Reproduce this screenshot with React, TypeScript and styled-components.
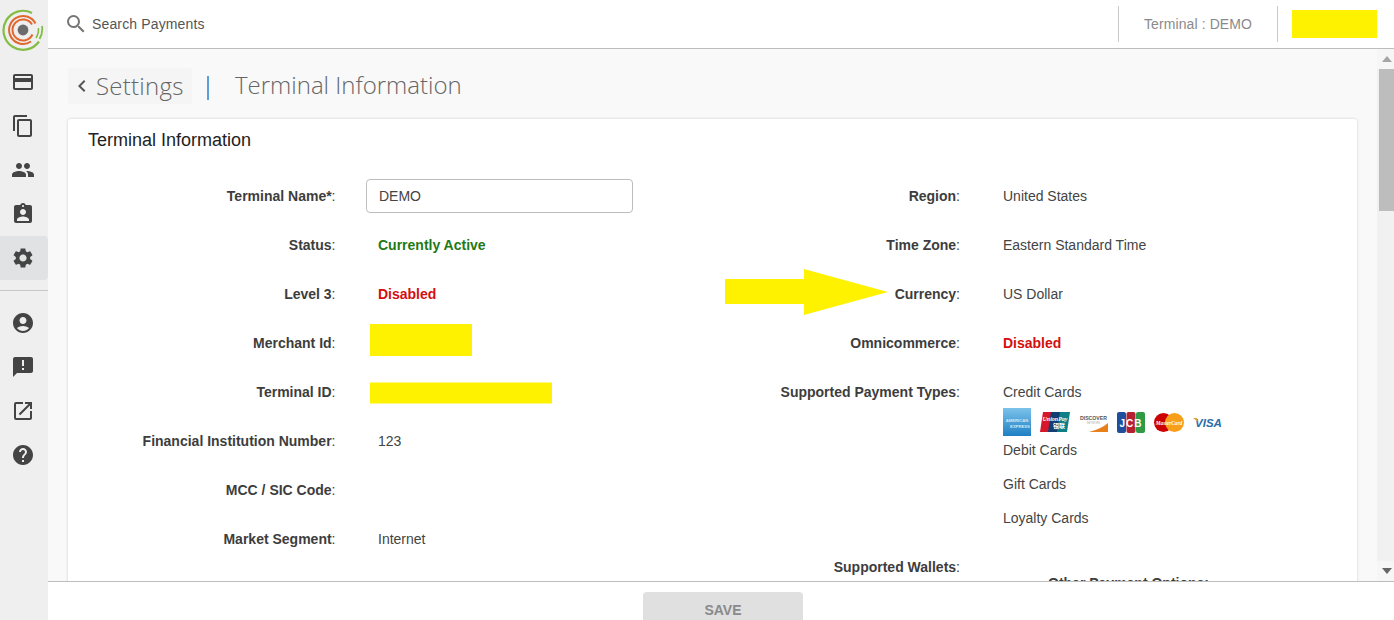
import React from "react";
import styled, { createGlobalStyle } from "styled-components";
import {
  MdCreditCard, MdContentCopy, MdPeople, MdAssignmentInd, MdSettings,
  MdAccountCircle, MdAnnouncement, MdOpenInNew, MdHelp, MdSearch, MdChevronLeft,
} from "react-icons/md";

const Global = createGlobalStyle`
  html, body { margin: 0; height: 100%; overflow: hidden; background: #fff; }
  body { font-family: "Liberation Sans", Arial, sans-serif; font-size: 14px; color: #333; }
  * { box-sizing: border-box; }
`;

const Shell = styled.div`display: flex; width: 100vw; height: 100vh; overflow: hidden;`;
const Sidebar = styled.nav`width: 48px; flex: none; background: #efefef; display: flex; flex-direction: column;`;
const LogoBox = styled.div`height: 60px; display: flex; align-items: center; padding-left: 2px;`;
const NavItem = styled.div<{ $active?: boolean }>`
  height: 44px; display: flex; align-items: center; justify-content: center; color: #444; padding-right: 2px;
  font-size: 24px; background: ${p => (p.$active ? "#e0e2e4" : "transparent")};
  border-radius: ${p => (p.$active ? "0 4px 4px 0" : "0")};
`;
const NavRule = styled.hr`border: 0; height: 1px; background: #c8c8c8; margin: 10px 0 10px;`;
const Main = styled.div`flex: 1; min-width: 0; display: flex; flex-direction: column;`;
const TopBar = styled.header`
  height: 49px; flex: none; background: #fff; border-bottom: 1px solid #bdbdbd; display: flex; align-items: center;
`;
const SearchIcon = styled.span`display: flex; margin-left: 16px; font-size: 24px; color: #757575;`;
const SearchText = styled.span`margin-left: 4px; font-size: 14px; letter-spacing: .14px; color: #555; flex: 1;`;
const TerminalCell = styled.div`
  height: 36px; width: 160px; border-left: 1px solid #c8c8c8; border-right: 1px solid #c8c8c8; color: #8a8a8a;
  display: flex; align-items: center; justify-content: center; font-size: 14px; letter-spacing: .1px; margin-right: 14px;
`;
const HeaderMask = styled.div`width: 85px; height: 28px; background: #fff200; margin-right: 17px;`;
const Body = styled.div`flex: 1; min-height: 0; display: flex;`;
const Scroller = styled.div`flex: 1; min-width: 0; overflow: hidden; background: #f9f9f9;`;
const ScrollRail = styled.div`width: 17px; flex: none; background: #f1f1f1; display: flex; flex-direction: column; align-items: flex-end;`;
const ScrollButton = styled.div`width: 17px; height: 20px; flex: none; display: flex; align-items: center; justify-content: center; padding-left: 3px; background: #f6f6f6;`;
const ScrollThumb = styled.div`width: 15px; height: 142px; background: #bdbdbd; flex: none;`;
const ScrollGap = styled.div`flex: 1;`;
const Page = styled.div`padding: 19px 20px 20px 20px;`;
const Crumbs = styled.div`display: flex; align-items: center; height: 36px; margin-bottom: 15px; font-family: "Open Sans", sans-serif; font-weight: 300; font-size: 24px; color: #666;`;
const BackChip = styled.div`
  width: 124px; height: 36px; background: #f5f5f5; border-radius: 3px; display: flex; align-items: center; padding: 0 0 2px 2px;
  font-size: 24px; letter-spacing: .25px; color: #666;
`;
const BackIcon = styled.span`display: flex; font-size: 24px; color: #555; margin-right: 2px; padding-top: 2px;`;
const Pipe = styled.span`margin-left: 15px; width: 28px; height: 24px; display: flex; align-items: center;`;
const PipeBar = styled.i`display: block; width: 2px; height: 24px; background: #5a9fd6; margin-top: 4px;`;
const CrumbTitle = styled.span`margin-top: -4px;`;
const Card = styled.section`
  position: relative; background: #fff; border-radius: 3px; box-shadow: 0 0 3px rgba(0, 0, 0, .18); height: 1753px; padding: 0 0 0 20px;
`;
const CardTitle = styled.h2`margin: 0; padding-top: 10px; height: 52px; font-size: 18px; line-height: 22px; font-weight: 400; color: #222;`;
const Columns = styled.div`display: grid; grid-template-columns: 625px 1fr;`;
const Column = styled.div`display: flex; flex-direction: column;`;
const Row = styled.div<{ $h?: number; $label?: number }>`
  display: grid; grid-template-columns: ${p => p.$label ?? 247}px 1fr; column-gap: ${p => 278 - (p.$label ?? 247)}px;
  height: ${p => p.$h ?? 49}px;
`;
const Label = styled.div`text-align: right; font-weight: 700; line-height: 50px; font-size: 14px; color: #3d3d3d;`;
const Colon = styled.span`font-weight: 400;`;
const Value = styled.div`padding-left: 12px; line-height: 50px; font-size: 14px; color: #444;`;
const StatusValue = styled(Value)<{ $tone: string }>`font-weight: 700; color: ${p => p.$tone};`;
const InputBox = styled.div`
  width: 267px; height: 34px; margin-top: 7.5px; border: 1px solid #bdbdbd; border-radius: 4px; background: #fff;
  padding-left: 12px; line-height: 32px; font-size: 14px; color: #444;
`;
const MaskCell = styled.div<{ $shift: number }>`display: flex; align-items: center; padding-left: 4px; height: 50px; transform: translateY(${p => p.$shift}px);`;
const Mask = styled.div<{ $w: number; $h: number }>`width: ${p => p.$w}px; height: ${p => p.$h}px; background: #fff200;`;
const StackValue = styled.div`padding-left: 12px; padding-top: 17px; font-size: 14px; color: #444; line-height: 17px;`;
const CreditLine = styled.div`height: 24px;`;
const StackLine = styled.div`height: 34px;`;
const LogoRow = styled.div`display: flex; gap: 9px; align-items: center; height: 28px; margin-bottom: 6px;`;
const Other = styled.div`
  margin-left: 335px; margin-top: -16px; font-weight: 700; font-size: 14px; color: #3d3d3d; white-space: nowrap;
`;
const Arrow = styled.svg`position: absolute; left: 657px; top: 149px;`;
const Footer = styled.footer`
  height: 39px; flex: none; background: #fff; border-top: 1px solid #bdbdbd; overflow: hidden;
  display: flex; justify-content: center; padding: 10px 0 0 4px;
`;
const SaveButton = styled.div`
  width: 160px; height: 36px; flex: none; background: #e0e0e0; border-radius: 4px; color: #8a8a8a; font-weight: 700; font-size: 14px;
  display: flex; align-items: center; justify-content: center;
`;

const Logo = () => (
  <svg width="42" height="42" viewBox="0 0 42 42" fill="none">
    <circle cx="21" cy="21" r="5.4" fill="#6b6b6b" />
    <path d="M30 15.5A10.5 10.5 0 1 0 30.5 25.5" stroke="#e0672d" strokeWidth="2" />
    <path d="M33.5 14.5A14 14 0 1 0 29 32.5" stroke="#e0672d" strokeWidth="2" />
    <path d="M30 4A19.5 19.5 0 1 0 37 32.5" stroke="#84bd45" strokeWidth="2.2" />
    <path d="M37.5 30A19.5 19.5 0 0 0 40 17" stroke="#84bd45" strokeWidth="1.8" />
    <path d="M34 29A16 16 0 0 0 36.5 19" stroke="#84bd45" strokeWidth="1.5" />
  </svg>
);

const Amex = () => (
  <svg width="28" height="28" viewBox="0 0 28 28">
    <defs><linearGradient id="ax" x1="0" y1="0" x2="0" y2="1"><stop offset="0" stopColor="#7cc3ea" /><stop offset="1" stopColor="#1e7fc4" /></linearGradient></defs>
    <rect width="28" height="28" fill="url(#ax)" />
    <text x="14" y="14" fontSize="4.2" fontFamily="Liberation Sans" fontWeight="700" textAnchor="middle" fill="#cfe9f8">AMERICAN</text>
    <text x="17" y="20" fontSize="4.2" fontFamily="Liberation Sans" fontWeight="700" textAnchor="middle" fill="#cfe9f8">EXPRESS</text>
  </svg>
);
const UnionPay = () => (
  <svg width="30" height="20" viewBox="0 0 30 20">
    <path d="M3 0h10l-3 20H0z" fill="#d6172b" />
    <path d="M11 0h11l-3 20H8z" fill="#123f73" />
    <path d="M20 0h10l-3 20H17z" fill="#0e7f86" />
    <text x="15" y="9" fontSize="6" fontFamily="Liberation Serif" fontStyle="italic" fontWeight="700" textAnchor="middle" fill="#fff">UnionPay</text>
    <text x="19" y="16" fontSize="6" fontFamily="Noto Sans CJK SC, sans-serif" fontWeight="700" textAnchor="middle" fill="#fff">银联</text>
  </svg>
);
const Discover = () => (
  <svg width="29" height="20" viewBox="0 0 29 20">
    <path d="M10 20Q22 17 29 11v9z" fill="#e8811c" />
    <text x="14.5" y="8" fontSize="5.2" fontFamily="Liberation Sans" fontWeight="700" textAnchor="middle" fill="#555">DISCOVER</text>
    <text x="14.5" y="12" fontSize="2.6" fontFamily="Liberation Sans" textAnchor="middle" fill="#aaa">NETWORK</text>
  </svg>
);
const Jcb = () => (
  <svg width="28" height="21" viewBox="0 0 28 21">
    <rect x="0" width="9" height="21" rx="2" fill="#1d4f9c" />
    <rect x="9.5" width="9" height="21" rx="2" fill="#b3202f" />
    <rect x="19" width="9" height="21" rx="2" fill="#2f9a45" />
    <text x="14" y="14.5" fontSize="10" fontFamily="Liberation Sans" fontWeight="700" textAnchor="middle" fill="#fff" letterSpacing="1">JCB</text>
  </svg>
);
const MasterCard = () => (
  <svg width="30" height="19" viewBox="0 0 30 19">
    <circle cx="9.5" cy="9.5" r="9.5" fill="#cc0000" />
    <circle cx="20.5" cy="9.5" r="9.5" fill="#f79e1b" />
    <text x="15" y="11.5" fontSize="5.4" fontFamily="Liberation Serif" fontStyle="italic" fontWeight="700" textAnchor="middle" fill="#fff">MasterCard</text>
  </svg>
);
const Visa = () => (
  <svg width="29" height="14" viewBox="0 0 29 14">
    <text x="15.5" y="12" fontSize="11.5" fontFamily="Liberation Sans" fontStyle="italic" fontWeight="700" textAnchor="middle" fill="#2a6ca8">VISA</text>
    <path d="M0 3h4l1 4z" fill="#e9a33a" />
  </svg>
);

const F = ({ name }: { name: string }) => <>{name}<Colon>:</Colon></>;

export default function App() {
  return (
    <Shell>
      <Global />
      <Sidebar>
        <LogoBox><Logo /></LogoBox>
        <NavItem><MdCreditCard /></NavItem>
        <NavItem><MdContentCopy /></NavItem>
        <NavItem><MdPeople /></NavItem>
        <NavItem><MdAssignmentInd /></NavItem>
        <NavItem $active><MdSettings /></NavItem>
        <NavRule />
        <NavItem><MdAccountCircle /></NavItem>
        <NavItem><MdAnnouncement /></NavItem>
        <NavItem><MdOpenInNew /></NavItem>
        <NavItem><MdHelp /></NavItem>
      </Sidebar>
      <Main>
        <TopBar>
          <SearchIcon><MdSearch /></SearchIcon>
          <SearchText>Search Payments</SearchText>
          <TerminalCell>Terminal : DEMO</TerminalCell>
          <HeaderMask />
        </TopBar>
        <Body>
          <Scroller>
            <Page>
              <Crumbs>
                <BackChip><BackIcon><MdChevronLeft /></BackIcon>Settings</BackChip>
                <Pipe><PipeBar /></Pipe>
                <CrumbTitle>Terminal Information</CrumbTitle>
              </Crumbs>
              <Card>
                <CardTitle>Terminal Information</CardTitle>
                <Columns>
                  <Column>
                    <Row $label={247.5}><Label>Terminal Name*<Colon>:</Colon></Label><div><InputBox>DEMO</InputBox></div></Row>
                    <Row $label={247.5}><Label><F name="Status" /></Label><StatusValue $tone="#1f7a14">Currently Active</StatusValue></Row>
                    <Row $label={247.5}><Label><F name="Level 3" /></Label><StatusValue $tone="#d40f0f">Disabled</StatusValue></Row>
                    <Row $label={247.5}><Label><F name="Merchant Id" /></Label><MaskCell $shift={-3}><Mask $w={102} $h={32} /></MaskCell></Row>
                    <Row $label={247.5}><Label><F name="Terminal ID" /></Label><MaskCell $shift={0.5}><Mask $w={182} $h={21} /></MaskCell></Row>
                    <Row $label={247.5}><Label><F name="Financial Institution Number" /></Label><Value>123</Value></Row>
                    <Row $label={247.5}><Label><F name="MCC / SIC Code" /></Label><Value /></Row>
                    <Row $label={247.5}><Label><F name="Market Segment" /></Label><Value>Internet</Value></Row>
                  </Column>
                  <Column>
                    <Row><Label><F name="Region" /></Label><Value>United States</Value></Row>
                    <Row><Label><F name="Time Zone" /></Label><Value>Eastern Standard Time</Value></Row>
                    <Row><Label><F name="Currency" /></Label><Value>US Dollar</Value></Row>
                    <Row><Label><F name="Omnicommerce" /></Label><StatusValue $tone="#d40f0f">Disabled</StatusValue></Row>
                    <Row $h={175}>
                      <Label><F name="Supported Payment Types" /></Label>
                      <StackValue>
                        <CreditLine>Credit Cards</CreditLine>
                        <LogoRow>
                          <Amex /><UnionPay /><Discover /><Jcb /><MasterCard /><Visa />
                        </LogoRow>
                        <StackLine>Debit Cards</StackLine>
                        <StackLine>Gift Cards</StackLine>
                        <StackLine>Loyalty Cards</StackLine>
                      </StackValue>
                    </Row>
                    <Row><Label><F name="Supported Wallets" /></Label><Value /></Row>
                    <Other>Other Payment Options:</Other>
                  </Column>
                </Columns>
                <Arrow width="165" height="48" viewBox="0 0 165 48">
                  <path d="M0 11H79V1L163 24 79 47V36H0z" fill="#fff200" />
                </Arrow>
              </Card>
            </Page>
          </Scroller>
          <ScrollRail>
            <ScrollButton>
              <svg width="10" height="6" viewBox="0 0 10 6"><path d="M5 0l5 6H0z" fill="#a5a5a5" /></svg>
            </ScrollButton>
            <ScrollThumb />
            <ScrollGap />
            <ScrollButton>
              <svg width="10" height="6" viewBox="0 0 10 6"><path d="M0 0h10L5 6z" fill="#666" /></svg>
            </ScrollButton>
          </ScrollRail>
        </Body>
        <Footer><SaveButton>SAVE</SaveButton></Footer>
      </Main>
    </Shell>
  );
}
